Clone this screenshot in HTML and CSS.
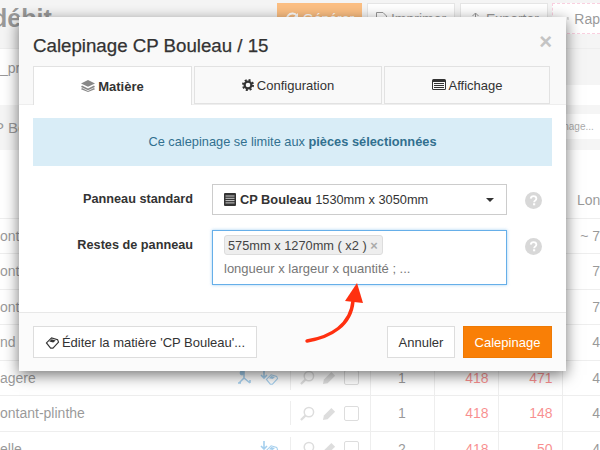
FILE: index.html
```html
<!DOCTYPE html>
<html lang="en">
<head>
    <meta charset="UTF-8">
    <meta name="viewport" content="width=device-width, initial-scale=1.0">
    <title>Calepinage</title>
    <link rel="stylesheet" href="styles.css">
</head>
<body>
    <svg class="sprites" width="0" height="0">
        <symbol id="i-search" viewBox="0 0 16 16"><circle cx="9.5" cy="6.5" r="5" fill="none" stroke="currentColor" stroke-width="1.6"/><path d="M6 10l-5 5" stroke="currentColor" stroke-width="2.4"/></symbol>
        <symbol id="i-pencil" viewBox="0 0 16 16"><path d="M1 15l1-5 8-8 4 4-8 8z" fill="currentColor"/></symbol>
        <symbol id="i-tag" viewBox="0 0 16 14"><path d="M1.5 7.5L7 2l6.5 2 1 2.5-6 6.5H6z" fill="none" stroke="currentColor" stroke-width="1.2"/><path d="M4.500 6L7 3.500l4.500 1.300-2.700 2.200z" fill="currentColor"/></symbol>
        <symbol id="i-help" viewBox="0 0 16 16"><circle cx="8" cy="8" r="8" fill="currentColor"/><path d="M5.4 6.2C5.6 4.6 6.7 3.9 8 3.9c1.5 0 2.7.9 2.7 2.3 0 1.9-2.1 1.9-2.1 3.4" fill="none" stroke="#fff" stroke-width="1.7"/><rect x="7.6" y="10.6" width="2" height="1.9" fill="#fff"/></symbol>
    </svg>

    <div class="page">
        <header class="topbar">
            <h1 class="page-title">débit</h1>
            <div class="actions">
                <button class="act act-primary">
                    <svg width="14" height="14" viewBox="0 0 14 14"><path d="M12 4a5.5 5.5 0 1 0 .8 4" fill="none" stroke="currentColor" stroke-width="1.8"/><path d="M13 1v4.500H8.500z" fill="currentColor"/></svg>
                    Générer
                </button>
                <button class="act">
                    <svg width="11" height="13" viewBox="0 0 11 13"><path d="M.5.500h6.500l3.500 3.500v8.500H.5z" fill="none" stroke="currentColor"/></svg>
                    Imprimer
                </button>
                <button class="act">
                    <svg width="13" height="14" viewBox="0 0 13 14"><path d="M6.500 9V1M3.500 4l3-3 3 3M3.500 7H.5v6.500h12V7h-3" fill="none" stroke="currentColor"/></svg>
                    Exporter
                </button>
                <button class="act act-dashed">
                    <svg width="11" height="13" viewBox="0 0 11 13"><rect x=".5" y="1" width="10" height="11.500" fill="none" stroke="currentColor"/><path d="M2 4h7M2 6.500h7M2 9h7" stroke="currentColor"/></svg>
                    Rap
                </button>
            </div>
        </header>
        <section class="project">
            <span class="project-name">_pr</span>
            <div class="project-strip"></div>
        </section>
        <section class="toolbar">
            <span class="toolbar-name">P Bo</span>
            <span class="toolbar-input">inage...</span>
        </section>
        <table class="pieces">
            <colgroup>
                <col class="col-name"><col class="col-tools"><col class="col-num"><col class="col-num"><col class="col-num"><col class="col-long">
            </colgroup>
            <thead>
                <tr><th></th><th></th><th></th><th></th><th></th><th class="long-head">Long</th></tr>
            </thead>
            <tbody>
                <tr><td class="name">ontant</td><td></td><td></td><td></td><td></td><td class="long">~ 7</td></tr>
                <tr><td class="name">ontant</td><td></td><td></td><td></td><td></td><td class="long">7</td></tr>
                <tr><td class="name">ontant</td><td></td><td></td><td></td><td></td><td class="long">7</td></tr>
                <tr><td class="name">nd</td><td></td><td></td><td></td><td></td><td class="long">4</td></tr>
                <tr>
                    <td class="name"><div class="name-cell"><span>agere</span><span class="row-flags">
                        <svg width="22" height="15" viewBox="0 0 22 15"><circle cx="5" cy="3" r="2.400" fill="currentColor"/><path d="M7 1v7M7 8l-5 5M7 8l6 5M1 13h3M13 13v-3" fill="none" stroke="currentColor" stroke-width="1.500"/></svg>
                        <svg width="20" height="15" viewBox="0 0 20 15"><path d="M4 0v7M1 5l3 3 3-3" fill="none" stroke="currentColor" stroke-width="1.600"/><svg x="5" y="3" width="14" height="12"><use href="#i-tag"/></svg></svg>
                    </span></div></td>
                    <td><div class="tools"><svg width="15" height="15"><use href="#i-search"/></svg><svg width="15" height="15"><use href="#i-pencil"/></svg><span class="check"></span></div></td>
                    <td class="center">1</td><td class="red">418</td><td class="red">471</td><td class="long">4</td>
                </tr>
                <tr>
                    <td class="name"><div class="name-cell"><span>ontant-plinthe</span></div></td>
                    <td><div class="tools"><svg width="15" height="15"><use href="#i-search"/></svg><svg width="15" height="15"><use href="#i-pencil"/></svg><span class="check"></span></div></td>
                    <td class="center">1</td><td class="red">418</td><td class="red">148</td><td class="long">4</td>
                </tr>
                <tr>
                    <td class="name"><div class="name-cell"><span>elle</span><span class="row-flags">
                        <svg width="20" height="15" viewBox="0 0 20 15"><path d="M4 0v7M1 5l3 3 3-3" fill="none" stroke="currentColor" stroke-width="1.600"/><svg x="5" y="3" width="14" height="12"><use href="#i-tag"/></svg></svg>
                    </span></div></td>
                    <td><div class="tools"><svg width="15" height="15"><use href="#i-search"/></svg><svg width="15" height="15"><use href="#i-pencil"/></svg><span class="check"></span></div></td>
                    <td class="center">2</td><td class="red">418</td><td class="red">50</td><td class="long">4</td>
                </tr>
            </tbody>
        </table>
    </div>

    <div class="backdrop"></div>

    <div class="modal">
        <div class="modal-head">
            <h2 class="modal-title">Calepinage CP Bouleau / 15</h2>
            <span class="modal-close">×</span>
        </div>
        <div class="tabs">
            <div class="tab tab-active tab-a">
                <svg class="tab-icon icon-layers" width="14" height="12" viewBox="0 0 14 12"><path d="M7 0l7 3.400-7 3.400L0 3.400z" fill="currentColor"/><path d="M1 5.600L7 8.500l6-2.900 1 1.300-7 3.400L0 6.900zM1 8l6 2.900L13 8l1 1.200L7 12 0 9.200z" fill="currentColor"/></svg>
                Matière
            </div>
            <div class="tab tab-b">
                <svg class="tab-icon" width="12" height="12" viewBox="0 0 12 12"><circle cx="6" cy="6" r="3.400" fill="none" stroke="currentColor" stroke-width="2.200"/><circle cx="6" cy="6" r="5" fill="none" stroke="currentColor" stroke-width="2" stroke-dasharray="2 1.930"/></svg>
                Configuration
            </div>
            <div class="tab tab-c">
                <svg class="tab-icon" width="14" height="12" viewBox="0 0 14 12"><rect width="14" height="11" rx="1.500" fill="currentColor"/><rect x="1" y="3" width="12" height="7" fill="#f9f9f9"/><path d="M2 4.500h10M2 6.500h10M2 8.500h10" stroke="currentColor"/></svg>
                Affichage
            </div>
        </div>
        <div class="modal-body">
            <div class="alert">Ce calepinage se limite aux <strong>pièces sélectionnées</strong></div>
            <div class="field">
                <label class="field-label">Panneau standard</label>
                <div class="select">
                    <svg width="12" height="13" viewBox="0 0 12 13"><rect width="12" height="13" rx="1" fill="#333"/><path d="M1.500 3h9M1.500 5.300h9M1.500 7.600h9M1.500 9.900h9" stroke="#ccc"/></svg>
                    <span><strong>CP Bouleau</strong> 1530mm x 3050mm</span>
                    <span class="caret"></span>
                </div>
                <svg class="help" width="17" height="17"><use href="#i-help"/></svg>
            </div>
            <div class="field">
                <label class="field-label">Restes de panneau</label>
                <div class="tag-input">
                    <span class="tag">575mm x 1270mm ( x2 ) <span class="tag-x">×</span></span>
                    <span class="placeholder">longueur x largeur x quantité ; ...</span>
                </div>
                <svg class="help" width="17" height="17"><use href="#i-help"/></svg>
            </div>
        </div>
        <div class="modal-foot">
            <button class="btn btn-edit"><svg width="15" height="13"><use href="#i-tag"/></svg>Éditer la matière 'CP Bouleau'...</button>
            <button class="btn btn-cancel">Annuler</button>
            <button class="btn btn-go">Calepinage</button>
        </div>
        <svg class="arrow" width="70" height="70" viewBox="0 0 70 70">
            <path d="M6 62C30 58 50 46 52 22" fill="none" stroke="#ff3010" stroke-width="3.400" stroke-linecap="round"/>
            <path d="M56 4L44 22 62 24z" fill="#ff3010"/>
        </svg>
    </div>
</body>
</html>
```

FILE: styles.css
```css
html, body {
    margin: 0;
    height: 450px;
    overflow: hidden;
}

body {
    position: relative;
    font-family: "Liberation Sans", Arial, sans-serif;
    font-size: 14px;
    color: #333;
    background: #fff;
}

.sprites {
    display: block;
}

.page {
    width: 600px;
}

/* page behind the dialog */
.topbar {
    display: flex;
    height: 49px;
    box-sizing: border-box;
    background: #ebebeb;
    border-bottom: 1px solid #ddd;
    padding-top: 3px;
}

.page-title {
    margin: 0 0 0 -8px;
    font-size: 25px;
    line-height: 30px;
    font-weight: bold;
    color: #333;
}

.actions {
    display: flex;
    gap: 5px;
    margin-left: auto;
    height: 31px;
    width: 323px;
    flex-shrink: 0;
}

.act {
    display: flex;
    align-items: center;
    justify-content: center;
    gap: 4px;
    width: 88px;
    flex-shrink: 0;
    padding: 0;
    border: 1px solid #ccc;
    background: #fff;
    font: 14px "Liberation Sans", Arial, sans-serif;
    color: #333;
}

.act-primary {
    width: 85px;
    border: none;
    background: #f97f06;
    color: #fff;
}

.act-dashed {
    justify-content: flex-start;
    gap: 5px;
    width: 48px;
    margin-left: -1px;
    padding-left: 14px;
    box-sizing: border-box;
    border: 1px dashed #f5a0c0;
    border-right: none;
}

.project {
    display: flex;
    height: 56px;
}

.project-name {
    margin: 11px 0 0;
}

.project-strip {
    margin-left: auto;
    width: 60px;
    height: 36px;
    background: #ebebeb;
}

.toolbar {
    display: flex;
    justify-content: space-between;
    height: 45px;
    box-sizing: border-box;
    padding: 9px 0 0;
    background: #ebebeb;
}

.toolbar-name {
    margin-left: -6px;
    font-size: 15px;
    line-height: 27px;
}

.toolbar-input {
    width: 50px;
    height: 25px;
    line-height: 25px;
    box-sizing: border-box;
    padding-left: 11px;
    background: #fff;
    font-size: 10px;
    color: #555;
}

.pieces {
    width: 600px;
    table-layout: fixed;
    border-collapse: collapse;
}

.col-name { width: 291px; }
.col-tools { width: 79px; }
.col-num { width: 64px; }
.col-long { width: 38px; }

.pieces th {
    height: 68px;
    padding: 32px 0 0;
    box-sizing: border-box;
    font-weight: normal;
    border-bottom: 1px solid #ddd;
}

.pieces td {
    height: 35.5px;
    padding: 0;
    box-sizing: border-box;
    border-bottom: 1px solid #ddd;
    border-left: 1px solid #ddd;
    white-space: nowrap;
}

.pieces td.name,
.pieces td:nth-child(2) {
    border-left: none;
}

.pieces .long-head {
    text-align: left;
    padding-left: 15px;
    white-space: nowrap;
}

.pieces .long {
    text-align: right;
}

.name-cell {
    display: flex;
    justify-content: space-between;
    align-items: center;
    height: 24px;
    border-right: 1px solid #ddd;
    padding-right: 10px;
    line-height: 24px;
}

.row-flags {
    display: flex;
    gap: 1px;
    color: #4a9fdc;
}

.tools {
    display: flex;
    align-items: center;
    gap: 7px;
    padding-left: 9px;
    color: #bbb;
}

.check {
    width: 13px;
    height: 13px;
    border: 1px solid #bbb;
    border-radius: 2px;
}

.center {
    text-align: center;
}

.pieces .red {
    text-align: right;
    padding-right: 9px;
    color: #f01c1c;
}

.backdrop {
    position: absolute;
    inset: 0;
    background: rgba(255, 255, 255, 0.5);
}

/* dialog */
.modal {
    position: absolute;
    left: 19px;
    top: 17px;
    width: 547px;
    height: 354px;
    display: flex;
    flex-direction: column;
    background: #fff;
    box-shadow: 0 4px 14px rgba(0, 0, 0, 0.55);
}

.modal-head {
    display: flex;
    justify-content: space-between;
    background: #f9f9f9;
    height: 49px;
    padding: 0 14px;
    flex-shrink: 0;
}

.modal-title {
    margin: 18px 0 0;
    font-size: 18.7px;
    line-height: 22px;
    font-weight: normal;
    color: #333;
    -webkit-text-stroke: 0.25px #333;
}

.modal-close {
    margin: 14px 0 0;
    font-size: 22px;
    line-height: 22px;
    font-weight: bold;
    color: #c4c4c4;
}

.tabs {
    display: flex;
    gap: 2px;
    height: 39px;
    box-sizing: border-box;
    padding: 0 14px;
    background: #f9f9f9;
    border-bottom: 1px solid #eee;
    flex-shrink: 0;
}

.tab {
    display: flex;
    justify-content: center;
    align-items: center;
    gap: 3px;
    height: 38px;
    box-sizing: border-box;
    border: 1px solid #e2e2e2;
    font-size: 13px;
    color: #333;
}

.tab-a { width: 159px; }
.tab-b { width: 188px; }
.tab-c { width: 166px; }

.tab-active {
    height: 39px;
    background: #fff;
    border-bottom: none;
    font-weight: bold;
}

.tab-icon {
    color: #333;
}

.icon-layers {
    color: #888;
}

.modal-body {
    flex: 1;
    padding: 13px 14px 0;
}

.alert {
    height: 48px;
    line-height: 47px;
    text-align: center;
    background: #d9edf7;
    color: #31708f;
    font-size: 12.8px;
    margin-bottom: 18px;
}

.field {
    display: flex;
    align-items: flex-start;
    margin-bottom: 15px;
}

.field-label {
    width: 160px;
    text-align: right;
    font-size: 12.7px;
    font-weight: bold;
    line-height: 31px;
    color: #333;
    flex-shrink: 0;
}

.select {
    display: flex;
    align-items: center;
    gap: 4px;
    width: 295px;
    height: 31px;
    box-sizing: border-box;
    margin-left: 19px;
    padding: 0 11px;
    border: 1px solid #ccc;
    font-size: 12.8px;
    color: #333;
}

.caret {
    margin-left: auto;
    margin-right: 1px;
    border-top: 4px solid #333;
    border-left: 4px solid transparent;
    border-right: 4px solid transparent;
}

.tag-input {
    display: flex;
    flex-direction: column;
    align-items: flex-start;
    width: 295px;
    height: 55px;
    box-sizing: border-box;
    margin-left: 19px;
    padding: 4px 11px;
    border: 1px solid #66afe9;
    box-shadow: 0 0 3px rgba(102, 175, 233, 0.6);
    font-size: 12.8px;
}

.tag {
    height: 20px;
    line-height: 19px;
    box-sizing: border-box;
    padding: 0 4px 0 3px;
    background: #eee;
    border: 1px solid #ddd;
    border-radius: 3px;
    color: #444;
}

.tag-x {
    color: #aaa;
    font-weight: bold;
}

.placeholder {
    margin-top: 6px;
    line-height: 16px;
    font-size: 13px;
    color: #777;
}

.help {
    margin: 8px 0 0 18px;
    color: #d8d8d8;
    flex-shrink: 0;
}

.modal-foot {
    display: flex;
    gap: 8px;
    height: 59px;
    box-sizing: border-box;
    padding: 13px 14px 0;
    border-top: 1px solid #e8e8e8;
    background: #fbfbfb;
}

.btn {
    height: 32px;
    box-sizing: border-box;
    font: 13px "Liberation Sans", Arial, sans-serif;
    color: #333;
    background: #fff;
    border: 1px solid #ddd;
    padding: 1px 0 0;
}

.btn-edit {
    display: flex;
    align-items: center;
    justify-content: center;
    gap: 2px;
    width: 224px;
    margin-right: auto;
}

.btn-cancel {
    width: 68px;
    border-width: 1.5px;
}

.btn-go {
    width: 89px;
    background: #f97f06;
    border-color: #ee7a05;
    color: #fff;
}

.arrow {
    position: absolute;
    left: 282px;
    top: 262px;
}
```
